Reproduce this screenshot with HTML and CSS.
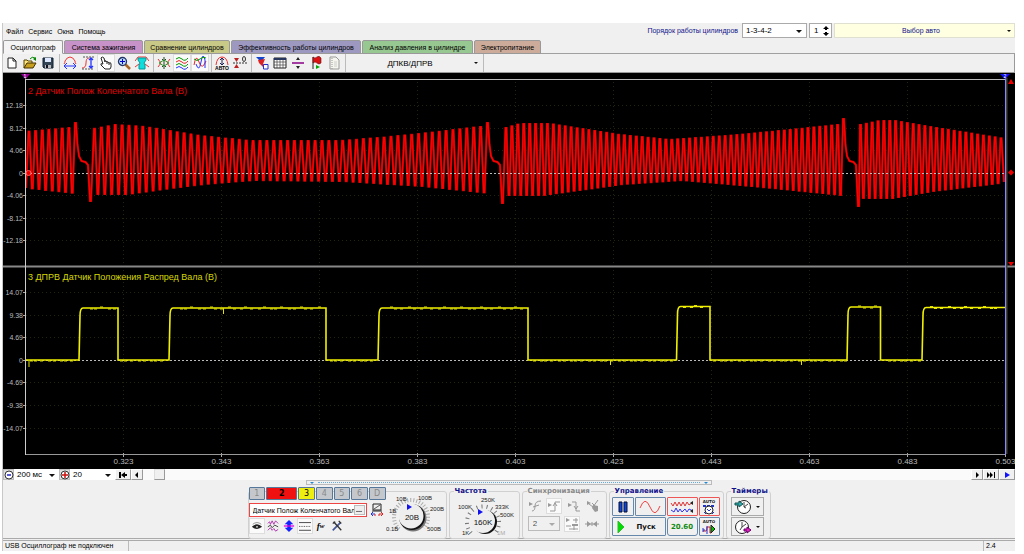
FILE: index.html
```
<!DOCTYPE html>
<html lang="ru">
<head>
<meta charset="utf-8">
<title>Осциллограф</title>
<link rel="stylesheet" href="styles.css">
</head>
<body>
<div class="app">
  <header class="header">
    <nav class="menu">
      <button>Файл</button><button>Сервис</button><button>Окна</button><button>Помощь</button>
    </nav>
    <label class="order-label" for="order">Порядок работы цилиндров</label>
    <span class="drop order"><select id="order"><option>1-3-4-2</option></select></span>
    <span class="spin"><input type="text" value="1" aria-label="Номер цилиндра"><svg viewBox="0 0 8 10"><path d="M4 0L7 3H5V4H3V3H1ZM4 10L7 7H5V6H3V7H1Z"/></svg></span>
    <button class="car"><span>Выбор авто</span><i class="caret"></i></button>
  </header>

  <div class="tabs">
    <button class="tab t-osc">Осциллограф</button>
    <button class="tab t-ign">Система зажигания</button>
    <button class="tab t-cmp">Сравнение цилиндров</button>
    <button class="tab t-eff">Эффективность работы цилиндров</button>
    <button class="tab t-prs">Анализ давления в цилиндре</button>
    <button class="tab t-pow">Электропитание</button>
  </div>

  <div class="toolbar">
    <div class="tools">
      <button aria-label="Новый"><svg viewBox="0 0 14 14"><path d="M3 2H8L11 5V12H3Z" fill="#fff" stroke="#222"/><path d="M8 2V5H11" fill="none" stroke="#222"/></svg></button>
      <button aria-label="Открыть"><svg viewBox="0 0 14 14"><path d="M1 12V4H4L5 5H9V7" fill="#ffe680" stroke="#554400"/><path d="M1 12L4 7H13L10 12Z" fill="#c8a020" stroke="#443300"/><path d="M7 3Q9 0 12 2" fill="none" stroke="#080"/><path d="M10 3L13 1V5Z" fill="#080"/></svg></button>
      <button aria-label="Сохранить"><svg viewBox="0 0 14 14"><path d="M2 2H12V12H3L2 11Z" fill="#345" stroke="#123"/><path d="M4 2H10V6H4Z" fill="#dde8ff"/><path d="M4 9H10V12H4Z" fill="#bbb"/><path d="M5 9H7V12H5Z" fill="#112"/></svg></button>
    </div>
    <div class="tools">
      <button aria-label="По горизонтали"><svg viewBox="0 0 14 14"><path d="M1 8Q2 7 2 5Q4 1 7 1T12 5Q12 7 13 8" fill="none" stroke="#e33"/><path d="M1 10H13M4 7L1 10L4 13M10 7L13 10L10 13" fill="none" stroke="#23f"/></svg></button>
      <button aria-label="По вертикали"><svg viewBox="0 0 14 14"><path d="M1 12Q5 12 5 7T8 2" fill="none" stroke="#e33"/><path d="M2 1H13M1 13H13" stroke="#555" stroke-dasharray="2 1"/><path d="M10 2V12M8 4L10 2L12 4M8 10L10 12L12 10" fill="none" stroke="#23f" stroke-width="1.3"/></svg></button>
      <button class="on" aria-label="Рука"><svg viewBox="0 0 14 14"><path d="M4 8L2 2Q3 0 5 2L6 6M6 6V5Q7 4 8 6V8M8 6Q9 5 10 7V9M10 7Q12 6 12 8V11L11 13H6L2 9Q1 7 4 8" fill="#fff" stroke="#222"/></svg></button>
      <button aria-label="Лупа"><svg viewBox="0 0 14 14"><path d="M8 8L13 13" stroke="#a62" stroke-width="2.5"/><circle cx="5.500" cy="5.500" r="4" fill="#bdf" stroke="#236" stroke-width="1.3"/><path d="M3 5.500H8M5.500 3V8" stroke="#00c"/></svg></button>
      <button aria-label="Фильтр"><svg viewBox="0 0 14 14"><path d="M0 5L3 1H11L14 5M0 11L4 8M10 8L14 11" fill="none" stroke="#e33"/><path d="M3 2H11V4L9 7L10 9V13H4V9L5 7L3 4Z" fill="#1dd" stroke="#099"/></svg></button>
    </div>
    <div class="tools">
      <button aria-label="Сжать"><svg viewBox="0 0 14 14" fill="none"><path d="M1 3L4 7L1 11M13 3L10 7L13 11" stroke="#e33"/><path d="M7 1V13M5 3L7 5L9 3M5 11L7 9L9 11" stroke="#242"/><path d="M2 7L7 4L12 7L7 10Z" stroke="#393"/></svg></button>
      <button class="on" aria-label="Раздельно"><svg viewBox="0 0 14 14" fill="none"><path d="M1 3Q4 0 7 3T13 2" stroke="#090"/><path d="M1 6Q4 3 7 6T13 5" stroke="#e22"/><path d="M1 9Q4 6 7 9T13 8" stroke="#090"/><path d="M1 12Q4 9 7 12T13 11" stroke="#23f"/></svg></button>
      <button class="on" aria-label="Вместе"><svg viewBox="0 0 14 14" fill="none"><path d="M1 9Q3 -3 6 6T13 5" stroke="#e22"/><path d="M3 8Q6 17 8 6T12 4V12" stroke="#23f"/><path d="M1 3Q4 6 7 3T13 2" stroke="#090"/></svg></button>
    </div>
    <div class="tools">
      <button aria-label="Авто"><svg viewBox="0 0 14 14"><path d="M1 9Q2 1 7 1T13 9" fill="none" stroke="#e33"/><path d="M7 2V9M5 4L7 2L9 4M5 7L7 9L9 7" fill="none" stroke="#225"/><text x="7" y="14" font-size="5" font-weight="bold" text-anchor="middle">АВТО</text></svg></button>
      <button aria-label="Ноль"><svg viewBox="0 0 14 14"><path d="M1 2H6L3.500 6ZM1 12H6L3.500 8Z" fill="#b22"/><path d="M0 7H14" stroke="#333" stroke-dasharray="2 1"/><ellipse cx="11" cy="3" rx="1.500" ry="2.500" fill="none" stroke="#333"/></svg></button>
    </div>
    <div class="tools">
      <button aria-label="Маркеры"><svg viewBox="0 0 14 14"><path d="M1 1H10L6 6Z" fill="#14c"/><path d="M3 4L10 3L8 8L12 11H8L4 7Z" fill="#d22"/><path d="M8.500 8.500H13V13H8.500Z" fill="#fff" stroke="#23c"/></svg></button>
      <button aria-label="Таблица"><svg viewBox="0 0 14 14"><path d="M1 2H13V12H1Z" fill="#fff" stroke="#222"/><path d="M1 3H13" stroke="#236" stroke-width="2"/><path d="M4 2V12M7 2V12M10 2V12M1 6H13M1 9H13" stroke="#444" stroke-width=".7"/></svg></button>
      <button aria-label="Разделитель"><svg viewBox="0 0 14 14"><path d="M1 7H13" stroke="#808" stroke-width="1.500"/><path d="M7 1L9 4H5ZM7 13L9 10H5Z" fill="#222"/></svg></button>
      <button aria-label="Флаг"><svg viewBox="0 0 14 14"><path d="M4 1V13" stroke="#222"/><path d="M4 1Q6 3 8 1T12 2V7Q10 9 8 7T4 7Z" fill="#d11" stroke="#611" stroke-width=".6"/><path d="M7 9L11 11L7 13Z" fill="#0a0"/></svg></button>
      <button aria-label="Отчёт"><svg viewBox="0 0 14 14"><path d="M3 1H9L12 4V13H3Z" fill="#f5f5ee" stroke="#999"/><path d="M5 2V13" stroke="#999" stroke-dasharray="1 1"/><path d="M7 6H10M7 8H10M7 10H10" stroke="#ccc"/></svg></button>
    </div>
    <button class="preset"><span>ДПКВ/ДПРВ</span><i class="caret"></i></button>
  </div>

  <svg class="chart" viewBox="3 73 1012 396" role="img" aria-label="Осциллограммы">
    <rect x="3" y="73" width="1012" height="396" fill="#000"/>
    <g id="grid"></g>
    <g id="traces"></g>
    <path d="M26 173.500H1005M26 360.500H1005" stroke="#bbb" stroke-dasharray="2 2"/>
    <g id="cam"></g>
    <path d="M3 266.500H1015" stroke="#888" stroke-width="2"/>
    <path d="M25 79.500H1005" stroke="#bbb"/>
    <path d="M25 454.500H1005" stroke="#999"/>
    <path d="M25.500 76V455" stroke="#ccc"/>
    <path d="M1006.500 78V454" stroke="#444" stroke-width="2"/>
    <path d="M1005.500 76V455" stroke="#88f"/>
    <path d="M21 74H30L25.500 79Z" fill="#909"/>
    <path d="M1000 74H1010L1005 79Z" fill="#11f"/>
    <text class="flag" x="25" y="78">1</text><text class="flag" x="1005" y="78">2</text>
    <path d="M1008 84L1011 79L1014 84ZM1008 262H1014L1011 266ZM1008 172.500L1011 169.500L1014 172.500L1011 175.500Z" fill="#e00"/>
    <circle cx="28.500" cy="173" r="2.500" fill="#e00" stroke="#f66"/>
    <text class="title red" x="28" y="94">2 Датчик Полож Коленчатого Вала (В)</text>
    <text class="title yellow" x="28" y="280">3 ДПРВ Датчик Положения Распред Вала (В)</text>
  </svg>

  <div class="timebar">
    <button class="step" aria-label="Уменьшить развёртку"><svg viewBox="0 0 10 10"><circle cx="5" cy="5" r="4" fill="#fff" stroke="#333"/><path d="M3 5H7" stroke="#22c" stroke-width="1.500"/></svg></button>
    <span class="drop scale"><select aria-label="Развёртка"><option>200 мс</option></select></span>
    <button class="step" aria-label="Увеличить"><svg viewBox="0 0 10 10"><circle cx="5" cy="5" r="4" fill="#fff" stroke="#333"/><path d="M2 5H8M5 2V8" stroke="#c11" stroke-width="1.500"/></svg></button>
    <span class="drop zoom"><select aria-label="Масштаб"><option>20</option></select></span>
    <button class="nav" aria-label="В начало"><svg viewBox="0 0 10 8"><path d="M1 1H3V7H1ZM7 1V3H9V5H7V7L3 4Z"/></svg></button>
    <button class="nav small" aria-label="Назад"><svg viewBox="0 0 10 8"><path d="M6 1V7L3 4Z"/></svg></button>
    <div class="track"><button class="thumb" aria-label="Прокрутка"></button></div>
    <button class="nav small" aria-label="Вперёд"><svg viewBox="0 0 10 8"><path d="M4 1V7L7 4Z"/></svg></button>
    <button class="nav" aria-label="В конец"><svg viewBox="0 0 10 8"><path d="M1 1V7L4 4ZM4 1V7L7 4ZM8 1H9V7H8Z"/></svg></button>
    <button class="nav" aria-label="Воспроизвести"><svg viewBox="0 0 10 8"><path d="M3 1V7L8 4Z" fill="#11f"/></svg></button>
  </div>

  <div class="splitter"><i></i><span></span><i></i></div>

  <div class="panels">
    <section class="panel channels">
      <div class="chan-main">
        <div class="chan-row">
          <button>1</button><button class="c2">2</button><button class="c3">3</button><button>4</button><button>5</button><button>6</button><button>D</button>
        </div>
        <div class="name-row">
          <span class="name"><input type="text" value="Датчик Полож Коленчатого Вала" aria-label="Имя канала"><button>...</button></span>
          <button class="flat" aria-label="Инверсия"><svg viewBox="0 0 14 14"><path d="M3 1H11V7H3Z" fill="#eee" stroke="#222"/><path d="M4 6L10 2" stroke="#555"/><path d="M2 8H12" stroke="#222"/><path d="M1 11H5M3 9L1 11L3 13" fill="none" stroke="#23c"/><path d="M9 11H13M11 9L13 11L11 13M5 13V11M9 13V11" fill="none" stroke="#d22"/></svg></button>
        </div>
        <div class="icon-row">
          <button class="on" aria-label="Видимость"><svg viewBox="0 0 14 14"><path d="M1 8Q7 2 13 8Q7 13 1 8Z" fill="#222"/><circle cx="7" cy="8" r="1" fill="#eee"/><path d="M2 5Q7 1 12 5" fill="none" stroke="#888"/></svg></button>
          <button aria-label="Фильтр шума"><svg viewBox="0 0 14 14" fill="none" stroke="#a2a"><path d="M1 4L3 2L4 5L6 1L8 5L10 1L13 4"/><path d="M1 8L4 6L6 9L9 6L13 8" stroke="#333"/><path d="M1 12L4 9L6 12L8 10L10 13L13 11"/></svg></button>
          <button aria-label="Смещение"><svg viewBox="0 0 14 14"><path d="M7 0L12 5H9V9H12L7 14L2 9H5V5H2Z" fill="#12f"/><path d="M1 7H13" stroke="#d0d" stroke-width="1.500"/></svg></button>
          <button class="on" aria-label="Уровни"><svg viewBox="0 0 14 14"><path d="M0 3H14M0 12H14" stroke="#333"/><path d="M0 7.500H14" stroke="#333" stroke-dasharray="1 1"/></svg></button>
          <button class="fx">f<small>w</small></button>
          <button aria-label="Настройки"><svg viewBox="0 0 14 14"><path d="M2 12L11 3" stroke="#459" stroke-width="2"/><path d="M3 2L12 12" stroke="#333" stroke-width="1.500"/><path d="M9 1L12 4M2 4L5 2" stroke="#333" stroke-width="1.500"/></svg></button>
        </div>
      </div>
      <svg class="knob v" viewBox="0 0 60 44">
        <path d="M13 35A17 17 0 1 1 38 34" fill="none" stroke="#aaa" stroke-width="4" stroke-dasharray="1 2"/>
        <circle cx="27" cy="24" r="13.500" fill="#777"/><circle cx="26" cy="23" r="13" fill="#111"/><circle cx="25" cy="22" r="12.500" fill="#eee"/>
        <path d="M21 10L26 13L21 16Z" fill="#11e"/>
        <text x="26" y="26" class="kval">20В</text>
        <text x="10" y="7">10В</text><text x="32" y="6">100В</text><text x="3" y="19">1В</text><text x="44" y="17">200В</text><text x="0" y="37">0.1В</text><text x="41" y="37">500В</text>
      </svg>
    </section>
    <section class="panel freq">
      <h2 class="blue">Частота</h2>
      <svg class="knob f" viewBox="0 0 66 46">
        <path d="M20 37A16 16 0 1 1 44 37" fill="none" stroke="#777" stroke-width="4" stroke-dasharray="1 4"/>
        <circle cx="34" cy="26" r="12" fill="#111"/><circle cx="32" cy="25" r="12" fill="#eee"/>
        <path d="M27 13L32 16L27 19Z" fill="#11e"/>
        <text x="32" y="29" class="kval">160K</text>
        <text x="30" y="6">250K</text><text x="7" y="13">100K</text><text x="44" y="13">333K</text><text x="49" y="21">500K</text><text x="11" y="39">1K</text><text x="46" y="39" fill="#aaa">1M</text>
      </svg>
    </section>
    <section class="panel sync">
      <h2>Синхронизация</h2>
      <div class="sync-row">
        <button disabled aria-label="Плавный фронт"><svg viewBox="0 0 14 14"><path d="M4 12Q7 12 7 7T13 2M5 8L11 6"/><path d="M1 3L5 5L1 7Z" class="gf"/></svg></button>
        <button class="on" disabled aria-label="Фронт"><svg viewBox="0 0 14 14"><path d="M3 12H8V3H13M6 7L8 4L10 7"/><path d="M1 4L5 6L1 8Z" class="gf"/></svg></button>
        <button disabled aria-label="Спад"><svg viewBox="0 0 14 14"><path d="M5 3H9V12H13M7 7L9 10L11 7"/><path d="M1 4L5 6L1 8Z" class="gf"/></svg></button>
        <button disabled aria-label="Ручная"><svg viewBox="0 0 14 14"><path d="M3 5L7 8L12 1M6 4L10 8"/><path d="M1 2L5 4L1 6ZM7 6L12 7V12L9 13L6 9Z" class="gf"/></svg></button>
      </div>
      <div class="sync-row second">
        <span class="drop src"><select disabled aria-label="Канал синхронизации"><option>2</option></select></span>
        <button class="on" disabled aria-label="Уровень"><svg viewBox="0 0 14 14"><path d="M1 9H6M8 3H13M11 1V6M4 12H13M9 9V13"/><path d="M1 1L5 3L1 5ZM7 7H13V9H7Z" class="gf"/></svg></button>
        <button disabled aria-label="Центр"><svg viewBox="0 0 14 14"><path d="M0 7H14M7 5V9"/><path d="M2 4L6 7L2 10ZM12 4L8 7L12 10Z" class="gf"/></svg></button>
      </div>
    </section>
    <section class="panel control">
      <h2 class="blue">Управление</h2>
      <div class="ctl-grid">
        <button aria-label="Пауза"><svg viewBox="0 0 14 14"><path d="M3 2H6V12H3ZM8 2H11V12H8Z" fill="#14d" stroke="#013"/></svg></button>
        <button aria-label="Синус"><svg class="wide" viewBox="0 0 24 14"><path d="M2 8Q7 -5 12 7T22 6" fill="none" stroke="#e44"/></svg></button>
        <button class="redb" aria-label="Сигналы"><svg class="wide" viewBox="0 0 24 14" fill="none"><path d="M1 3L3 6L5 2L7 6L9 2L11 6L13 2L15 6L17 2L19 5L23 2" stroke="#d33"/><path d="M1 10L4 12L6 8L8 12L10 9L12 12L15 9L17 12L19 9L23 11" stroke="#33e"/><path d="M23 1V5L20 3ZM23 9V13L20 11Z" fill="#222"/></svg></button>
        <button class="redb auto"><b>AUTO</b><svg viewBox="0 0 14 11"><path d="M1 2H13" stroke="#23c" stroke-width="2" stroke-dasharray="3 1"/><circle cx="7" cy="6" r="4" fill="#fff" stroke="#222"/><path d="M5 5L7 7L9 5M2 8L4 10M12 8L10 10" fill="none" stroke="#23c"/></svg></button>
        <button class="start"><svg viewBox="0 0 14 14"><path d="M3 1L9 7L3 13Z" fill="#0d0" stroke="#3b3"/></svg><span>Пуск</span></button>
        <button class="volt">20.60</button>
        <button class="auto"><b>AUTO</b><svg viewBox="0 0 14 11"><path d="M1 7H4Q5 7 5 3H8V9H9" fill="none" stroke="#c22"/><path d="M1 4V8M3 6H1M5 2V10" stroke="#23c"/><path d="M9 1L13 5L9 9Z" fill="#0b0" stroke="#222"/></svg></button>
      </div>
    </section>
    <section class="panel timers">
      <h2 class="blue">Таймеры</h2>
      <div class="timer-list">
        <button aria-label="Таймер запуска"><svg viewBox="0 0 18 16"><circle cx="10" cy="8" r="6.500" fill="#fff" stroke="#222"/><path d="M10 3V8L14 5M10 8L12 9" fill="none" stroke="#444"/><path d="M1 4H5V2L9 5L5 8V6H1Z" fill="#3aa" stroke="#155"/></svg><i class="caret"></i></button>
        <button aria-label="Таймер остановки"><svg viewBox="0 0 18 16"><circle cx="8" cy="8" r="6.500" fill="#fff" stroke="#222"/><path d="M8 3V8L12 5M8 8L6 11" fill="none" stroke="#444"/><path d="M10 10H13V8L17 11L13 14V12H10Z" fill="#d2b" stroke="#606"/></svg><i class="caret"></i></button>
      </div>
    </section>
  </div>

  <footer class="status"><span class="usb">USB Осциллограф не подключен</span><span class="fill"></span><span class="ver">2.4</span></footer>
</div>
<script src="chart.js"></script>
</body>
</html>
```
FILE: styles.css
```
* { box-sizing: border-box; }
body { margin: 0; background: #fff; font: 7px "Liberation Sans", sans-serif; color: #000; }
button, input, select { font: inherit; color: inherit; margin: 0; padding: 0; border: 0; background: none; border-radius: 0; }
svg { display: block; flex: none; }
button svg { width: 14px; height: 14px; }
select { appearance: none; width: 100%; height: 100%; padding-left: 3px; opacity: 1; font-size: 8px; }
.app { margin: 23px 9px 0 2px; background: #f0f0f0; border-left: 1px solid #c8c8c8; }
.caret { display: block; flex: none; width: 0; border: 2px solid transparent; border-top-color: #111; border-bottom: 0; }
.drop { position: relative; display: block; background: #fff; }
.drop::after { content: ""; position: absolute; right: 4px; top: 50%; margin-top: -1px; border: 3px solid transparent; border-top-color: #111; border-bottom: 0; pointer-events: none; }

.header { display: flex; height: 17px; gap: 2px; }
.menu { display: flex; gap: 5px; padding-left: 3px; margin-right: auto; }
.order-label { color: #11118a; line-height: 15px; margin-right: 2px; }
.order { width: 65px; height: 15px; border: 1px solid #aaa; }
.spin { display: flex; align-items: center; width: 23px; height: 15px; border: 1px solid #aaa; background: #fff; font-size: 8px; }
.spin input { width: 12px; padding-left: 4px; }
.spin svg { width: 8px; height: 10px; }
.car { display: flex; align-items: center; width: 181px; height: 15px; background: #ffffe1; border: 1px solid #e0e0d0; color: #11118a; padding-right: 3px; }
.car span { flex: 1; }

.tabs { display: flex; gap: 1px; height: 14px; border-bottom: 1px solid #a0a0a0; }
.tab { height: 14px; border: 1px solid #999; border-radius: 2px 2px 0 0; white-space: nowrap; }
.t-osc { width: 60px; background: #f4f4f4; border-bottom-color: #f4f4f4; }
.t-ign { width: 79px; background: #c792c8; }
.t-cmp { width: 86px; background: #c9c987; }
.t-eff { width: 130px; background: #9c98c0; }
.t-prs { width: 111px; background: #98c892; }
.t-pow { width: 67px; background: #ccab9a; }

.toolbar { display: flex; height: 19px; border-right: 1px solid #999; border-bottom: 1px solid #999; }
.tools { display: flex; padding: 0 2px 0 1px; border-right: 1px solid #bbb; }
.tools:first-child { padding-left: 0; }
.tools button { display: flex; align-items: center; justify-content: center; width: 18px; height: 18px; }
.tools .on, .icon-row .on, .sync-row .on { background: #fafafa; border: 1px solid #ddd; }
.preset { display: flex; align-items: center; width: 138px; padding-right: 5px; border-right: 1px solid #bbb; font-size: 8px; }
.preset span { flex: 1; }

.chart { width: 100%; height: auto; }
.chart .title { font-size: 9px; }
.red { fill: #e00000; }
.yellow { fill: #d8d800; }
.tick { font-size: 7px; fill: #bbb; text-anchor: end; }
.time { font-size: 8px; fill: #bbb; text-anchor: middle; }
.flag { font-size: 5px; fill: #fff; text-anchor: middle; }

.timebar { display: flex; height: 11px; background: #fafafa; }
.step { width: 11px; background: #ddd; border: 1px solid #bbb; display: flex; align-items: center; justify-content: center; }
.step svg { width: 10px; height: 10px; }
.scale, .zoom { width: 45px; height: 11px; }
.nav { display: flex; align-items: center; justify-content: center; width: 16px; background: #f0f0f0; border: 1px solid; border-color: #fff #999 #999 #fff; }
.small { width: 12px; }
.nav svg { width: 10px; height: 8px; }
.track { flex: 1; display: flex; padding-left: 11px; }
.thumb { width: 11px; background: #f0f0f0; border: 1px solid; border-color: #ddd #999 #999 #ddd; }

.splitter { display: flex; align-items: center; gap: 4px; width: 406px; height: 5px; margin: 0 auto 2px; border: 1px solid #bbb; padding: 0 3px; }
.splitter i { border: 2px solid transparent; border-top-color: #28c; border-bottom: 0; }
.splitter span { flex: 1; border-top: 1px dotted #6ad; }

.panels { display: flex; justify-content: center; gap: 2px; height: 52px; border-bottom: 1px solid #aaa; }
.panel { height: 48px; margin-top: 4px; border: 1px solid #d0d0d0; border-radius: 3px; }
.panel h2 { width: max-content; margin: -5px 0 0 4px; padding: 0 1px; background: #f0f0f0; font: bold 7px/9px "DejaVu Sans", sans-serif; color: #888; }
.panel .blue { color: #10108a; }
.channels { display: flex; width: 199px; }
.chan-main { width: 138px; margin-top: -5px; }
.chan-row { display: flex; gap: 1px; }
.chan-row button { flex: 1; height: 13px; border: 1px solid #579; border-radius: 1px; background: #c4c8cc; color: #888; font: 8px "DejaVu Sans", sans-serif; }
.chan-row .c2 { flex: none; width: 31px; background: #f01010; color: #000; font-weight: bold; }
.chan-row .c3 { background: #eeee11; color: #000; }
.name-row { display: flex; align-items: center; gap: 3px; margin-top: 3px; }
.name { display: flex; width: 118px; height: 14px; border: 1px solid #e44; background: #fff; padding: 1px; }
.name input { flex: 1; min-width: 0; padding-left: 2px; }
.name button { width: 11px; background: #eee; border: 1px solid #bbb; font-weight: bold; line-height: 6px; }
.icon-row { display: flex; margin-top: 1px; }
.icon-row button { display: flex; align-items: center; justify-content: center; width: 16px; height: 16px; }
.icon-row svg { width: 12px; height: 12px; }
.icon-row .fx { font: italic bold 9px "Liberation Serif", serif; }
.fx small { font-size: 7px; }
.knob { font-size: 6px; fill: #222; }
.knob .kval { font-size: 8px; text-anchor: middle; fill: #111; }
.v { width: 60px; height: 44px; margin-top: 2px; }
.freq { width: 71px; }
.f { width: 66px; height: 46px; margin-left: 1px; }
.sync { width: 85px; }
.sync-row { display: flex; justify-content: space-around; padding: 2px 3px 0; }
.sync-row button { display: flex; align-items: center; justify-content: center; width: 16px; height: 16px; }
.sync-row svg { fill: none; stroke: #999; }
.sync-row .gf { fill: #999; stroke: none; }
.src { width: 32px; height: 15px; border: 1px solid #bbb; background: #f0f0f0; }
.src select { color: #555; padding-left: 4px; }
.src::after { border-top-color: #aaa; }
.control { width: 115px; }
.ctl-grid { display: grid; grid-template-columns: 22px 31px 31px 21px; grid-auto-rows: 19px; gap: 1px; padding: 1px 0 0 2px; }
.ctl-grid button { display: flex; align-items: center; justify-content: center; background: #f0f0f0; border: 1px solid #68a; border-radius: 1px; }
.ctl-grid .wide { width: 24px; }
.ctl-grid .redb { border-color: #e55; }
.ctl-grid .start { grid-column: span 2; justify-content: flex-start; gap: 8px; font: bold 7px "DejaVu Sans", sans-serif; padding-left: 2px; color: #111; }
.ctl-grid .volt { font: bold 7px "DejaVu Sans", sans-serif; color: #118a11; border-radius: 3px; }
.ctl-grid .auto { flex-direction: column; font: 5px "DejaVu Sans", sans-serif; line-height: 5px; color: #222; }
.auto b { font-size: 4px; }
.auto svg { height: 11px; }
.timers { width: 45px; }
.timer-list { display: flex; flex-direction: column; gap: 1px; padding: 1px 0 0 4px; }
.timer-list button { display: flex; align-items: center; justify-content: center; gap: 4px; width: 33px; height: 19px; border: 1px solid #aaa; }
.timer-list svg { width: 18px; height: 16px; }

.status { display: flex; height: 11px; line-height: 10px; margin-top: 1px; border-top: 1px solid #aaa; }
.usb { width: 126px; padding-left: 2px; border-right: 1px solid #bbb; white-space: nowrap; }
.fill { flex: 1; }
.ver { width: 32px; padding-left: 2px; border-left: 1px solid #bbb; }
```
FILE: chart.js
```
const NS = "http://www.w3.org/2000/svg";
const grid = document.getElementById("grid");
const traces = document.getElementById("traces");
const cam = document.getElementById("cam");

function add(parent, tag, attrs, text) {
  const el = document.createElementNS(NS, tag);
  for (const k in attrs) el.setAttribute(k, attrs[k]);
  if (text !== undefined) el.textContent = text;
  parent.appendChild(el);
}

// Axes
const rows = [
  [105.5, "12.18"], [128.5, "8.12"], [150.5, "4.06"], [173.5, "0"], [195.5, "-4.06"], [218.5, "-8.12"], [240.5, "-12.18"],
  [292.5, "14.07"], [315.5, "9.38"], [337.5, "4.69"], [360.5, "0"], [382.5, "-4.69"], [405.5, "-9.38"], [428.5, "-14.07"]
];
for (const [y, label] of rows) {
  add(grid, "path", { d: `M26 ${y}H1005`, stroke: "#24240c", "stroke-dasharray": "1 3" });
  add(grid, "path", { d: `M23 ${y}H25`, stroke: "#aaa" });
  add(grid, "text", { x: 23, y: y + 2, class: "tick" }, label);
}
for (let i = 1; i <= 10; i++) {
  const x = Math.round(25.5 + i * 98) - 0.5;
  if (i < 10) add(grid, "path", { d: `M${x} 82V454`, stroke: "#24240c", "stroke-dasharray": "1 3" });
  add(grid, "path", { d: `M${x} 453V457`, stroke: "#aaa" });
  add(grid, "text", { x, y: 464, class: "time" }, (0.303 + i * 0.02).toFixed(3));
}

// Linear interpolation through [x, y] knots
function at(knots, x) {
  for (let i = 1; i < knots.length; i++) {
    const [x0, y0] = knots[i - 1], [x1, y1] = knots[i];
    if (x <= x1) return y0 + (y1 - y0) * Math.max(0, x - x0) / (x1 - x0);
  }
  return knots[knots.length - 1][1];
}
const high = [[26, 132], [70, 128], [94, 129], [115, 125], [145, 127], [200, 136], [250, 141], [340, 141], [380, 138], [420, 134], [480, 127], [506, 128], [520, 124], [550, 124], [620, 135], [670, 140], [740, 135], [800, 129], [838, 125], [861, 125], [880, 121], [895, 121], [930, 127], [1005, 139]];
const low = [[26, 188], [72, 193], [94, 194], [125, 194], [160, 189], [200, 184], [250, 180], [340, 181], [420, 186], [486, 193], [505, 195], [540, 195], [620, 184], [680, 180], [760, 187], [840, 195], [862, 198], [890, 198], [930, 191], [1005, 182]];

// Crankshaft sensor: 58 teeth and a two-tooth gap per turn
const pts = [[26, 188]];
function teeth(from, to, count, last) {
  const step = (to - from) / count;
  for (let i = 0; i <= count; i++) {
    const x = from + i * step;
    const end = i === count;
    const y = end && last ? last : at(high, x);
    pts.push([x - 0.5, y], [x + 0.5, y]);
    if (!end) pts.push([x + step / 2 - 0.5, at(low, x)], [x + step / 2 + 0.5, at(low, x)]);
  }
}
function gap(x, bottom) {
  pts.push([x + 2, 145], [x + 3.5, 156], [x + 6, 161], [x + 10, 162], [x + 12.5, 165], [x + 14.5, bottom], [x + 15.5, bottom]);
}
teeth(29, 75.5, 7, 123);
gap(75.5, 201);
teeth(94.5, 487.5, 57, 123);
gap(487.5, 203);
teeth(506, 843.5, 57, 119);
gap(843.5, 206);
teeth(860.5, 1001, 24);
pts.push([1004, 182]);
const line = pts.map(p => p.map(v => v.toFixed(1)).join(",")).join(" ");
add(traces, "polyline", { points: line, fill: "none", stroke: "#b00000", "stroke-width": 2.2 });
add(traces, "polyline", { points: line, fill: "none", stroke: "#ff0000", "stroke-width": 1.3 });

// Camshaft sensor pulses: rise, fall, level
const pulses = [[79, 118, 308], [169, 326, 308], [378, 528, 308], [676.5, 710, 306.5], [847, 880.5, 307], [922, 1005, 307.5]];
let d = "M26 360";
for (const [a, b, y] of pulses) d += `H${a}L${a + 1} ${y + 8}Q${a + 1} ${y} ${a + 4} ${y}H${b}` + (b < 1005 ? "V360" : "");
add(cam, "path", { d, fill: "none", stroke: "#f0f000", "stroke-width": 1.6 });
let noise = "";
for (let x = 30, i = 0; x < 1000; x += 4 + (i * 7) % 5, i++) {
  const p = pulses.find(q => x > q[0] - 3 && x < q[1] + 1);
  if (!p) noise += `M${x} 361h3`;
  else if (x > p[0] + 6 && x < p[1] - 3) noise += `M${x} ${p[2] + (i % 3 ? 1 : -1)}h3`;
}
noise += "M29 360v7M223.500 308v6M610.500 360v5M801.500 360v5";
add(cam, "path", { d: noise, fill: "none", stroke: "#e0e000", "stroke-width": 1 });
```
